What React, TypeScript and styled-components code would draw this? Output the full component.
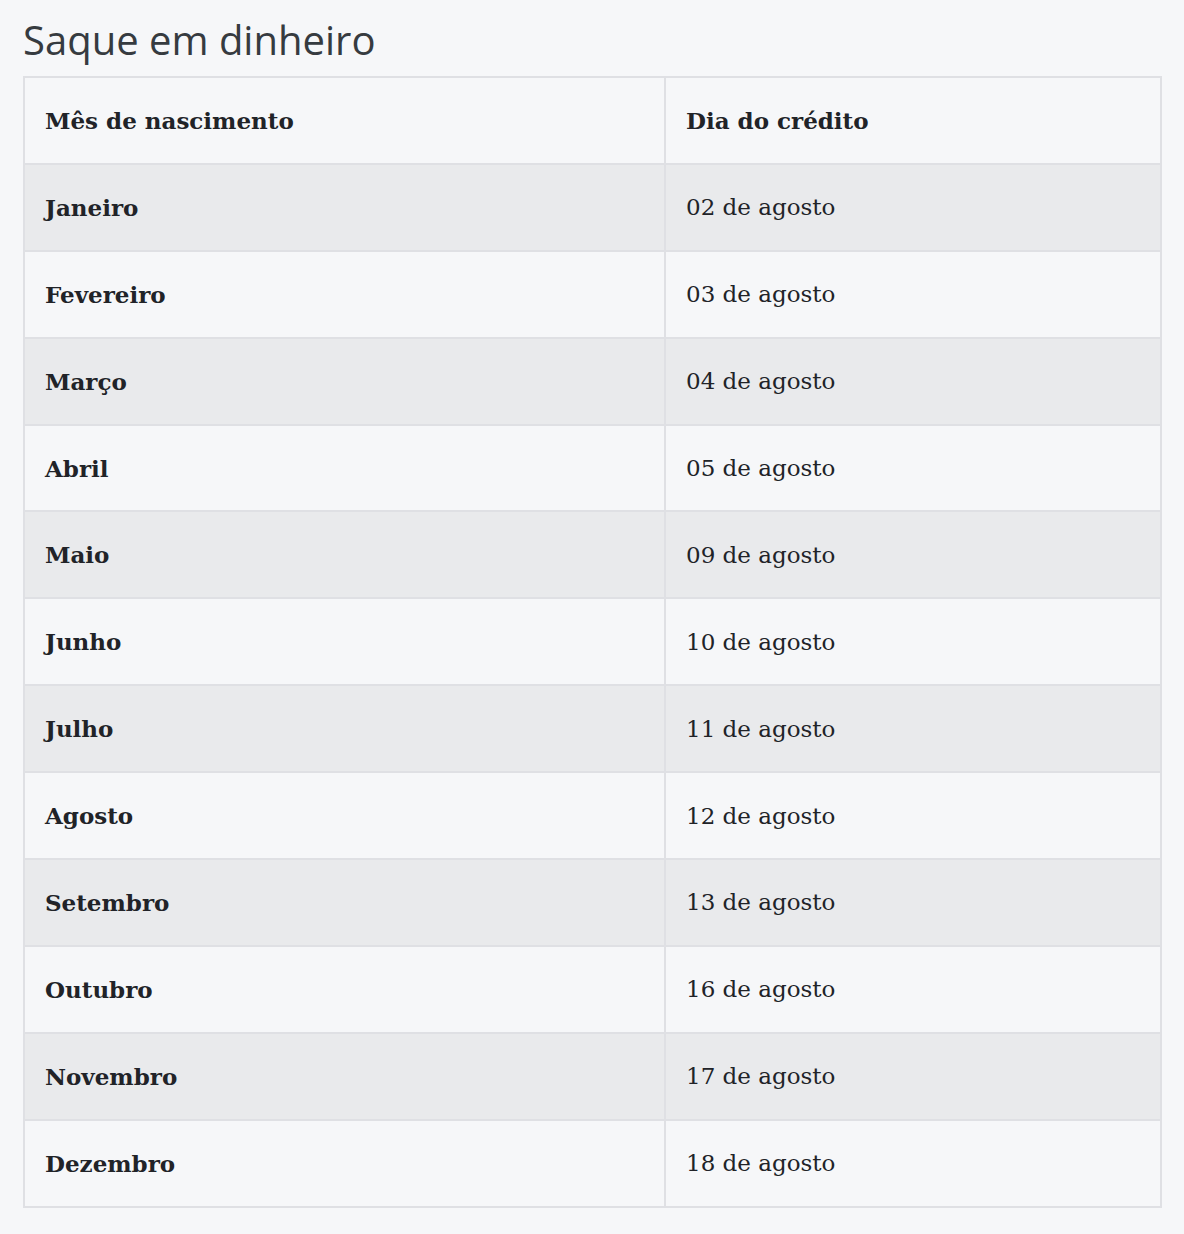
import React from "react";
import styled, { createGlobalStyle } from "styled-components";

const Global = createGlobalStyle`
  html, body { margin: 0; padding: 0; background: #f6f7f9; }
`;

const Page = styled.div`
  padding: 14px 22px 26px 23px;
  background: #f6f7f9;
  min-height: 1234px;
  box-sizing: border-box;
`;

const Title = styled.h2`
  margin: 0 0 10px 0;
  font-family: "Open Sans", sans-serif;
  font-weight: 400;
  font-size: 40px;
  line-height: 52px;
  color: #363b40;
`;

const Table = styled.table`
  width: 1139px;
  border-collapse: collapse;
  border: 2px solid #dfe0e4;
  font-family: "DejaVu Serif", serif;
  font-size: 23px;
  color: #212328;
`;

const Row = styled.tr<{ $striped?: boolean }>`
  background: ${(p) => (p.$striped ? "#e9eaec" : "#f6f7f9")};
`;

const Cell = styled.td<{ $bold?: boolean }>`
  border: 2px solid #dfe0e4;
  height: 86.9px;
  padding: 0 20px;
  box-sizing: border-box;
  font-weight: ${(p) => (p.$bold ? 700 : 400)};
  text-align: left;
  vertical-align: middle;
`;

const HeadCell = styled(Cell).attrs({ as: "th" })`
  font-weight: 700;
`;

const rows: [string, string][] = [
  ["Janeiro", "02 de agosto"],
  ["Fevereiro", "03 de agosto"],
  ["Março", "04 de agosto"],
  ["Abril", "05 de agosto"],
  ["Maio", "09 de agosto"],
  ["Junho", "10 de agosto"],
  ["Julho", "11 de agosto"],
  ["Agosto", "12 de agosto"],
  ["Setembro", "13 de agosto"],
  ["Outubro", "16 de agosto"],
  ["Novembro", "17 de agosto"],
  ["Dezembro", "18 de agosto"],
];

export default function App() {
  return (
    <>
      <Global />
      <Page>
        <Title>Saque em dinheiro</Title>
        <Table>
          <colgroup>
            <col style={{ width: "641px" }} />
            <col />
          </colgroup>
          <thead>
            <Row>
              <HeadCell>Mês de nascimento</HeadCell>
              <HeadCell>Dia do crédito</HeadCell>
            </Row>
          </thead>
          <tbody>
            {rows.map(([m, d], i) => (
              <Row key={m} $striped={i % 2 === 0}>
                <Cell $bold>{m}</Cell>
                <Cell>{d}</Cell>
              </Row>
            ))}
          </tbody>
        </Table>
      </Page>
    </>
  );
}
